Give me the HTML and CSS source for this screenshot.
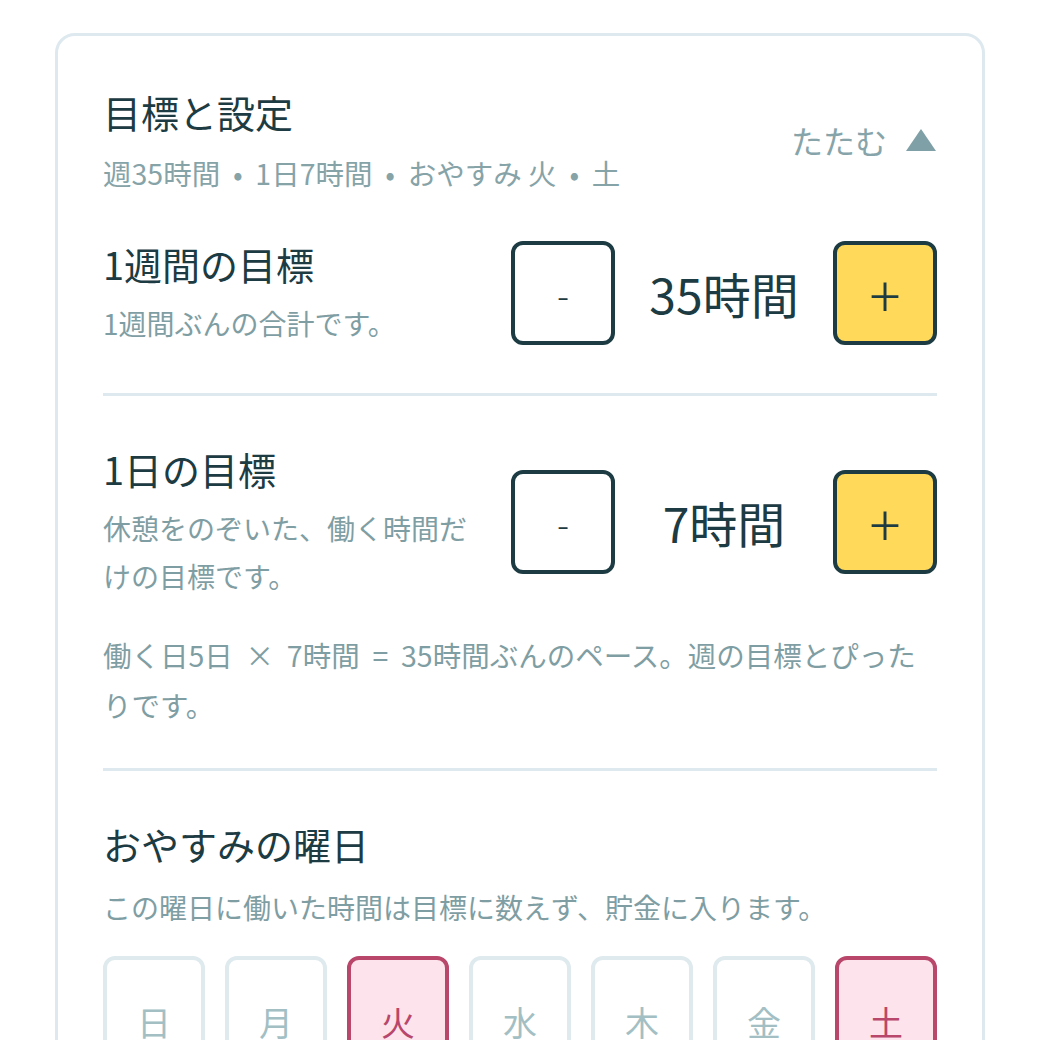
FILE: index.html
```html
<!DOCTYPE html>
<html lang="ja">
<head>
    <meta charset="UTF-8">
    <meta name="viewport" content="width=device-width, initial-scale=1.0">
    <title>目標と設定</title>
    <link rel="stylesheet" href="styles.css">
</head>
<body>
    <div class="card">
        <div class="card-head">
            <div>
                <h1 class="card-title">目標と設定</h1>
                <p class="summary">週35時間&nbsp; •&nbsp; 1日7時間&nbsp; •&nbsp; おやすみ 火&nbsp; •&nbsp; 土</p>
            </div>
            <button type="button" class="toggle">
                たたむ
                <svg class="toggle-icon" viewBox="0 0 32 24" width="32" height="24">
                    <polygon points="16,1 31,23 1,23" fill="currentColor"/>
                </svg>
            </button>
        </div>

        <div class="section section-first">
            <div class="row">
                <div class="row-text">
                    <h2 class="label">1週間の目標</h2>
                    <p class="desc">1週間ぶんの合計です。</p>
                </div>
                <div class="stepper">
                    <button type="button" class="step-btn">-</button>
                    <span class="step-value">35時間</span>
                    <button type="button" class="step-btn step-plus">+</button>
                </div>
            </div>
        </div>

        <div class="section section-mid">
            <div class="row">
                <div class="row-text">
                    <h2 class="label">1日の目標</h2>
                    <p class="desc">休憩をのぞいた、働く時間だけの目標です。</p>
                </div>
                <div class="stepper">
                    <button type="button" class="step-btn">-</button>
                    <span class="step-value">7時間</span>
                    <button type="button" class="step-btn step-plus">+</button>
                </div>
            </div>
            <p class="note">働く日5日&nbsp; ×&nbsp; 7時間&nbsp; =&nbsp; 35時間ぶんのペース。週の目標とぴったりです。</p>
        </div>

        <div class="section section-last">
            <h2 class="label">おやすみの曜日</h2>
            <p class="desc desc-wide">この曜日に働いた時間は目標に数えず、貯金に入ります。</p>
            <div class="days">
                <button type="button" class="day">日</button>
                <button type="button" class="day">月</button>
                <button type="button" class="day day-off">火</button>
                <button type="button" class="day">水</button>
                <button type="button" class="day">木</button>
                <button type="button" class="day">金</button>
                <button type="button" class="day day-off">土</button>
            </div>
        </div>
    </div>
</body>
</html>
```

FILE: styles.css
```css
body {
    margin: 0;
    background: #ffffff;
    font-family: "Noto Sans CJK JP", "Noto Sans", sans-serif;
    color: #1c3b42;
}

h1, h2, p {
    margin: 0;
    font-weight: 400;
}

button {
    font-family: inherit;
}

.card {
    width: 930px;
    box-sizing: border-box;
    margin: 33px 0 0 55px;
    padding: 51px 45px 40px;
    border: 3px solid #dde9ee;
    border-radius: 20px;
}

.card-head {
    display: flex;
    justify-content: space-between;
    align-items: center;
}

.card-title {
    font-size: 38px;
    line-height: 50px;
}

.summary {
    margin-top: 16px;
    font-size: 28.5px;
    line-height: 40px;
    color: #86a3a8;
}

.toggle {
    display: flex;
    align-items: center;
    gap: 18px;
    padding: 0;
    border: none;
    background: none;
    font-size: 32px;
    color: #86a4a9;
    cursor: pointer;
}

.toggle-icon {
    color: #7fa0a6;
}

/* setting blocks split by a light rule */
.section {
    padding: 48px 0 46px;
    border-bottom: 3px solid #dde9ee;
}

.section-first {
    padding-top: 46px;
}

.section-mid {
    padding-bottom: 38px;
}

.section-last {
    border-bottom: none;
    padding-bottom: 0;
}

.row {
    display: flex;
    align-items: center;
    gap: 34px;
}

.row-text {
    flex: 1;
}

.label {
    font-size: 38px;
    line-height: 50px;
}

.desc {
    margin-top: 10px;
    font-size: 28px;
    line-height: 48px;
    color: #7f9ea3;
}

.desc-wide {
    margin-top: 14px;
}

.stepper {
    display: flex;
    align-items: center;
    flex-shrink: 0;
}

.step-btn {
    width: 104px;
    height: 104px;
    box-sizing: border-box;
    border: 4px solid #1c3b42;
    border-radius: 12px;
    background: #ffffff;
    color: #1c3b42;
    font-size: 36px;
    font-weight: 300;
    line-height: 1;
    padding: 0;
    cursor: pointer;
}

.step-plus {
    background: #ffd95a;
    font-size: 58px;
    font-weight: 200;
}

.step-value {
    width: 218px;
    text-align: center;
    font-size: 48px;
}

.note {
    margin-top: 30px;
    font-size: 28.5px;
    line-height: 50px;
    color: #7f9ea3;
}

.days {
    display: grid;
    grid-template-columns: repeat(7, 1fr);
    gap: 20px;
    margin-top: 25px;
}

.day {
    padding: 42px 0;
    border: 4px solid #dfeaee;
    border-radius: 12px;
    background: #ffffff;
    color: #a3bfc4;
    font-size: 34px;
    line-height: 40px;
    cursor: pointer;
}

.day-off {
    border-color: #b8476b;
    background: #fde4ec;
    color: #b8476b;
}
```
